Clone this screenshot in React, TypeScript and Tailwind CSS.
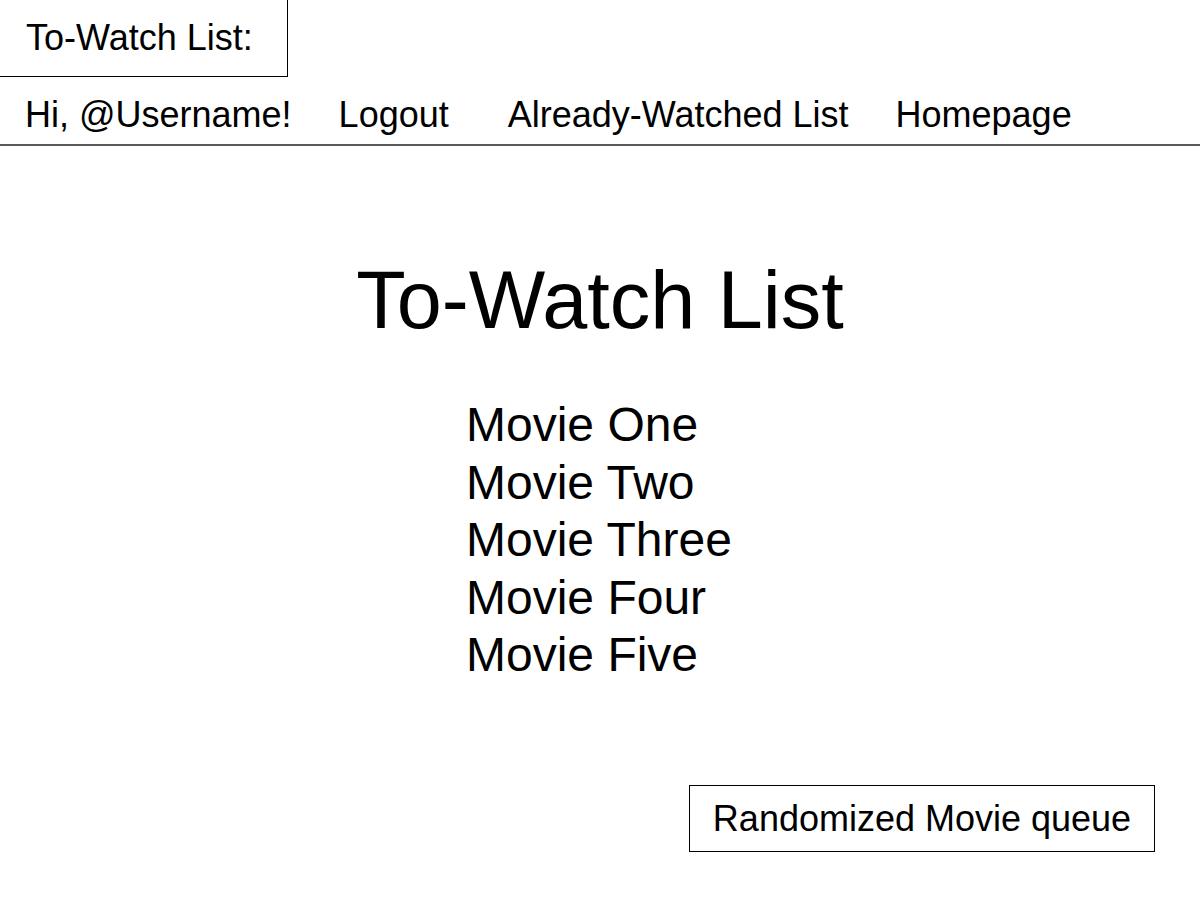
import React from "react";

const movies = ["Movie One", "Movie Two", "Movie Three", "Movie Four", "Movie Five"];

export default function App() {
  return (
    <div
      className="w-[1200px] h-[900px] bg-white text-black overflow-hidden flex flex-col"
      style={{ fontFamily: '"Liberation Sans", Arial, sans-serif' }}
    >
      <div className="w-[288px] h-[77px] border-r border-b border-black pt-[18px] pl-[26px] text-[36px] leading-[40px] shrink-0 whitespace-nowrap">
        To-Watch List:
      </div>
      <nav className="flex items-start pt-[18px] pl-[25px] h-[67px] text-[36px] leading-[40px] shrink-0 whitespace-nowrap">
        <span>Hi, @Username!</span>
        <a className="ml-[47px]">Logout</a>
        <a className="ml-[59px]">Already-Watched List</a>
        <a className="ml-[47px]">Homepage</a>
      </nav>
      <div className="h-[2px] bg-[#5a5a5a] shrink-0" />
      <h1 className="mt-[108px] text-center text-[81px] leading-[92px] font-normal">To-Watch List</h1>
      <ul className="mt-[50px] pl-[466px] text-[48px] leading-[57.6px]">
        {movies.map((m) => (
          <li key={m}>{m}</li>
        ))}
      </ul>
      <div className="mt-[101px] flex justify-end pr-[45px]">
        <button className="w-[466px] h-[67px] border border-black bg-white pt-[13px] text-center text-[36px] leading-[40px] flex justify-center items-start">
          Randomized Movie queue
        </button>
      </div>
    </div>
  );
}
